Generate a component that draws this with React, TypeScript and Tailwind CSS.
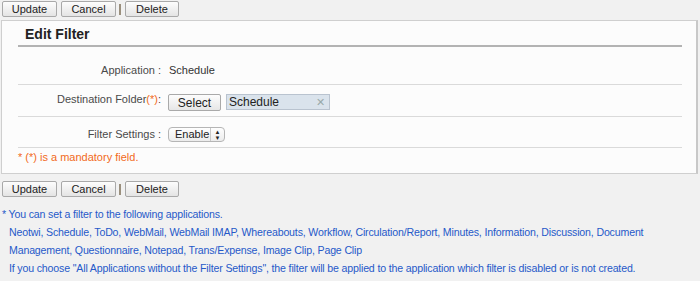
import React from "react";

function Btn({ children, w }: { children: React.ReactNode; w: string }) {
  return (
    <button
      className={`${w} h-[16px] rounded-[2px] border border-[#a9a9a9] bg-gradient-to-b from-[#fdfdfd] to-[#e4e4e4] text-[11px] leading-[14px] text-[#222] flex items-center justify-center`}
    >
      {children}
    </button>
  );
}

function ButtonBar() {
  return (
    <div className="flex items-center pl-[2px] h-[16px]">
      <Btn w="w-[55px]">Update</Btn>
      <div className="w-[4px]" />
      <Btn w="w-[55px]">Cancel</Btn>
      <div className="w-[3px]" />
      <div className="w-[2px] h-[11px] bg-[#9a8f7d]" />
      <div className="w-[4px]" />
      <Btn w="w-[54px]">Delete</Btn>
    </div>
  );
}

export default function App() {
  return (
    <div
      className="w-[700px] h-[281px] bg-[#f1f1f1] overflow-hidden pt-[1px]"
      style={{ fontFamily: '"Liberation Sans", Arial, sans-serif' }}
    >
      <ButtonBar />
      <div className="mt-[3px] ml-[1px] w-[697px] h-[154px] border border-[#cfcfcf] border-r-2 border-r-[#c8c8c8] bg-[#fcfcfc]">
        <div className="ml-[16px] w-[664px]">
          <div className="h-[26px] border-b-2 border-[#b3b3b3] flex items-end pb-[2px] pl-[7px]">
            <span className="text-[14px] font-bold text-[#222] leading-[17px]">Edit Filter</span>
          </div>
          <div className="h-[38px] border-b border-[#dadada] flex items-end pb-[7px] text-[11px] leading-[13px]">
            <div className="w-[143px] text-right text-[#4a4a4a]">Application :</div>
            <div className="ml-[8px] text-[#333]">Schedule</div>
          </div>
          <div className="h-[32px] border-b border-[#dadada] flex items-end pb-[5px] text-[11px]">
            <div className="w-[143px] text-right text-[#4a4a4a] self-center mt-[3px]">
              Destination Folder<span className="text-[#f26a1b]">(*)</span>:
            </div>
            <div className="ml-[7px] w-[53px] h-[17px] rounded-[2px] border border-[#a9a9a9] bg-gradient-to-b from-[#fdfdfd] to-[#e6e6e6] flex items-center justify-center text-[#222] text-[12px]">
              Select
            </div>
            <div className="ml-[5px] mb-[1px] w-[104px] h-[16px] border border-[#b9c3cf] bg-[#dae3ec] flex items-center justify-between pl-[2px] pr-[4px] text-[12px] text-[#222]">
              <span>Schedule</span>
              <span className="text-[#9aa] text-[11px] leading-none">✕</span>
            </div>
          </div>
          <div className="h-[31px] border-b border-[#dadada] flex items-end pb-[4px] text-[11px]">
            <div className="w-[143px] text-right text-[#4a4a4a] self-center mt-[8px]">Filter Settings :</div>
            <div className="ml-[7px] mb-[1px] w-[57px] h-[15px] rounded-[4px] border border-[#b5b5b5] bg-gradient-to-b from-[#fefefe] to-[#ececec] flex items-center text-[#222] text-[11px]">
              <span className="flex-1 pl-[6px]">Enable</span>
              <span className="w-[14px] h-full border-l border-[#c8c8c8] flex items-center justify-center text-[6px] leading-[6px] flex-col">
                <span>▲</span>
                <span>▼</span>
              </span>
            </div>
          </div>
          <div className="h-[19px] flex items-center text-[11px] text-[#f26a1b]">* (*) is a mandatory field.</div>
        </div>
      </div>
      <div className="mt-[7px]">
        <ButtonBar />
      </div>
      <div className="mt-[8px] text-[10.6px] tracking-[-0.16px] leading-[18px] text-[#2659c9] pl-[2px]">
        <div>* You can set a filter to the following applications.</div>
        <div className="pl-[7px] w-[650px]">
          Neotwi, Schedule, ToDo, WebMail, WebMail IMAP, Whereabouts, Workflow, Circulation/Report, Minutes, Information, Discussion, Document Management, Questionnaire, Notepad, Trans/Expense, Image Clip, Page Clip
        </div>
        <div className="pl-[7px]">
          If you choose "All Applications without the Filter Settings", the filter will be applied to the application which filter is disabled or is not created.
        </div>
      </div>
    </div>
  );
}
